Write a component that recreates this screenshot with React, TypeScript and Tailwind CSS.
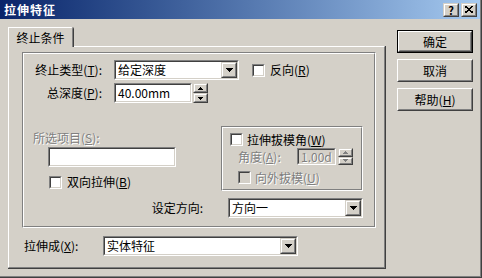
import type { ReactNode } from "react";

// Classic Windows 3D frames
function Sunken({ className = "", inner = "bg-white", children }: { className?: string; inner?: string; children?: ReactNode }) {
  return (
    <div className={`border border-t-[#808080] border-l-[#808080] border-r-white border-b-white ${className}`}>
      <div className={`h-full w-full border border-t-[#404040] border-l-[#404040] border-r-[#d4d0c8] border-b-[#d4d0c8] ${inner}`}>
        {children}
      </div>
    </div>
  );
}

function Raised({ className = "", children }: { className?: string; children?: ReactNode }) {
  return (
    <div className={`border border-t-[#d4d0c8] border-l-[#d4d0c8] border-r-[#404040] border-b-[#404040] bg-[#d4d0c8] ${className}`}>
      <div className="flex h-full w-full items-center justify-center border border-t-white border-l-white border-r-[#808080] border-b-[#808080]">
        {children}
      </div>
    </div>
  );
}

function Etched({ className = "", children }: { className?: string; children?: ReactNode }) {
  return (
    <div className={`border border-t-[#808080] border-l-[#808080] border-r-white border-b-white ${className}`}>
      <div className="h-full w-full border border-t-white border-l-white border-r-[#808080] border-b-[#808080]">
        {children}
      </div>
    </div>
  );
}

function DownArrow() {
  return (
    <svg width="7" height="4" viewBox="0 0 7 4" shapeRendering="crispEdges">
      <polygon points="0,0 7,0 3.5,4" fill="#000" />
    </svg>
  );
}

function Combo({ value, className = "" }: { value: string; className?: string }) {
  return (
    <Sunken className={className}>
      <div className="flex h-full items-center">
        <span className="flex-1 pl-[2px] leading-[14px]">{value}</span>
        <Raised className="h-full w-[16px]">
          <DownArrow />
        </Raised>
      </div>
    </Sunken>
  );
}

function Spinner({ disabled = false, className = "" }: { disabled?: boolean; className?: string }) {
  const c = disabled ? "#808080" : "#000";
  return (
    <div className={`flex flex-col ${className}`}>
      <Raised className="h-1/2 w-full">
        <svg width="5" height="3" viewBox="0 0 5 3" shapeRendering="crispEdges">
          <polygon points="2.5,0 5,3 0,3" fill={c} />
        </svg>
      </Raised>
      <Raised className="h-1/2 w-full">
        <svg width="5" height="3" viewBox="0 0 5 3" shapeRendering="crispEdges">
          <polygon points="0,0 5,0 2.5,3" fill={c} />
        </svg>
      </Raised>
    </div>
  );
}

function Check({ disabled = false }: { disabled?: boolean }) {
  return <Sunken className="h-[13px] w-[13px] shrink-0" inner={disabled ? "bg-[#d4d0c8]" : "bg-white"} />;
}

const grey = "text-[#808080] [text-shadow:1px_1px_0_#fff]";

function DialogButton({ label, isDefault = false }: { label: ReactNode; isDefault?: boolean }) {
  const btn = (
    <div className="h-full w-full border border-t-white border-l-white border-r-[#404040] border-b-[#404040]">
      <div className="flex h-full w-full items-center justify-center border border-t-[#d4d0c8] border-l-[#d4d0c8] border-r-[#808080] border-b-[#808080] leading-[14px]">
        {label}
      </div>
    </div>
  );
  return (
    <div className={`h-[23px] w-[76px] ${isDefault ? "border border-black" : ""}`}>{btn}</div>
  );
}

export default function App() {
  return (
    <div className="h-[278px] w-[482px] border-r border-b border-[#404040] bg-[#d4d0c8] font-['Noto_Sans_CJK_SC','Noto_Sans',sans-serif] text-[12px] text-black">
      <div className="h-full w-full border-r border-b border-[#808080]">
        {/* Title bar */}
        <div className="flex h-[19px] items-center bg-gradient-to-r from-[#0a246a] to-[#a6caf0] pl-[4px] pr-[3px]">
          <span className="flex-1 text-[12px] font-bold tracking-[1px] text-white leading-[14px]">拉伸特征</span>
          <div className="flex gap-[2px]">
            <Raised className="h-[14px] w-[16px]">
              <span className="text-[11px] font-bold leading-[10px]">?</span>
            </Raised>
            <Raised className="h-[14px] w-[16px]">
              <svg width="8" height="7" viewBox="0 0 8 7" shapeRendering="crispEdges">
                <path d="M0 0L8 7M8 0L0 7" stroke="#000" strokeWidth="1.6" />
              </svg>
            </Raised>
          </div>
        </div>

        {/* Body */}
        <div className="flex pl-[8px] pt-[8px]">
          {/* Tab control */}
          <div className="flex w-[378px] flex-col">
            <div className="flex">
              <div className="relative z-10 -mb-px h-[20px] w-[66px] rounded-tr-[2px] border-r border-[#404040] bg-[#d4d0c8]">
                <div className="flex h-full items-center justify-center rounded-tr-[2px] border-t border-l border-white border-r border-r-[#808080] leading-[14px]">
                  终止条件
                </div>
              </div>
            </div>
            <div className="h-[223px] border-r border-b border-[#404040]">
              <div className="h-full border-t border-l border-white border-r border-b border-r-[#808080] border-b-[#808080]">
                <Etched className="ml-[13px] mt-[5px] h-[176px] w-[354px]">
                  {/* Row 1 */}
                  <div className="mt-[6px] flex h-[20px] items-center">
                    <span className="w-[78px] text-right leading-[14px]">终止类型(<u>T</u>):</span>
                    <Combo value="给定深度" className="ml-[12px] h-full w-[125px]" />
                    <div className="ml-[13px]">
                      <Check />
                    </div>
                    <span className="ml-[5px] leading-[14px]">反向(<u>R</u>)</span>
                  </div>
                  {/* Row 2 */}
                  <div className="mt-[3px] flex h-[20px] items-center">
                    <span className="w-[78px] text-right leading-[14px]">总深度(<u>P</u>):</span>
                    <Sunken className="ml-[12px] h-full w-[78px]">
                      <div className="flex h-full items-center pl-[2px] leading-[14px]">40.00mm</div>
                    </Sunken>
                    <Spinner className="ml-[1px] h-full w-[15px]" />
                  </div>
                  {/* Lower area */}
                  <div className="mt-[23px] flex">
                    <div className="flex w-[197px] flex-col pl-[9px]">
                      <span className={`mt-[5px] h-[14px] leading-[14px] ${grey}`}>所选项目(<u>S</u>):</span>
                      <Sunken className="ml-[15px] mt-[2px] h-[20px] w-[128px]" />
                      <div className="ml-[16px] mt-[8px] flex items-center">
                        <Check />
                        <span className="ml-[5px] leading-[14px]">双向拉伸(<u>B</u>)</span>
                      </div>
                    </div>
                    <Etched className="h-[65px] w-[142px]">
                      <div className="ml-[7px] mt-[5px] flex h-[13px] items-center">
                        <Check />
                        <span className="ml-[4px] leading-[14px]">拉伸拔模角(<u>W</u>)</span>
                      </div>
                      <div className="ml-[15px] mt-[2px] flex h-[17px] items-center">
                        <span className={`w-[59px] leading-[14px] ${grey}`}>角度(<u>A</u>):</span>
                        <Sunken className="h-full w-[39px]" inner="bg-[#d4d0c8]">
                          <div className={`flex h-full items-center pl-[2px] leading-[14px] ${grey}`}>1.00d</div>
                        </Sunken>
                        <Spinner disabled className="ml-[2px] h-full w-[15px]" />
                      </div>
                      <div className="ml-[15px] mt-[6px] flex h-[13px] items-center">
                        <Check disabled />
                        <span className={`ml-[4px] leading-[14px] ${grey}`}>向外拔模(<u>U</u>)</span>
                      </div>
                    </Etched>
                  </div>
                  <div className="mt-[7px] flex h-[20px] items-center">
                    <span className="w-[179px] text-right leading-[14px]">设定方向:</span>
                    <Combo value="方向一" className="ml-[25px] h-full w-[135px]" />
                  </div>
                </Etched>
                <div className="ml-[15px] mt-[8px] flex h-[20px] items-center">
                  <span className="w-[79px] leading-[14px]">拉伸成(<u>X</u>):</span>
                  <Combo value="实体特征" className="h-full w-[195px]" />
                </div>
              </div>
            </div>
          </div>

          {/* Dialog buttons */}
          <div className="ml-[11px] mt-[3px] flex flex-col gap-[6px]">
            <DialogButton label="确定" isDefault />
            <DialogButton label="取消" />
            <DialogButton label={<>帮助(<u>H</u>)</>} />
          </div>
        </div>
      </div>
    </div>
  );
}
